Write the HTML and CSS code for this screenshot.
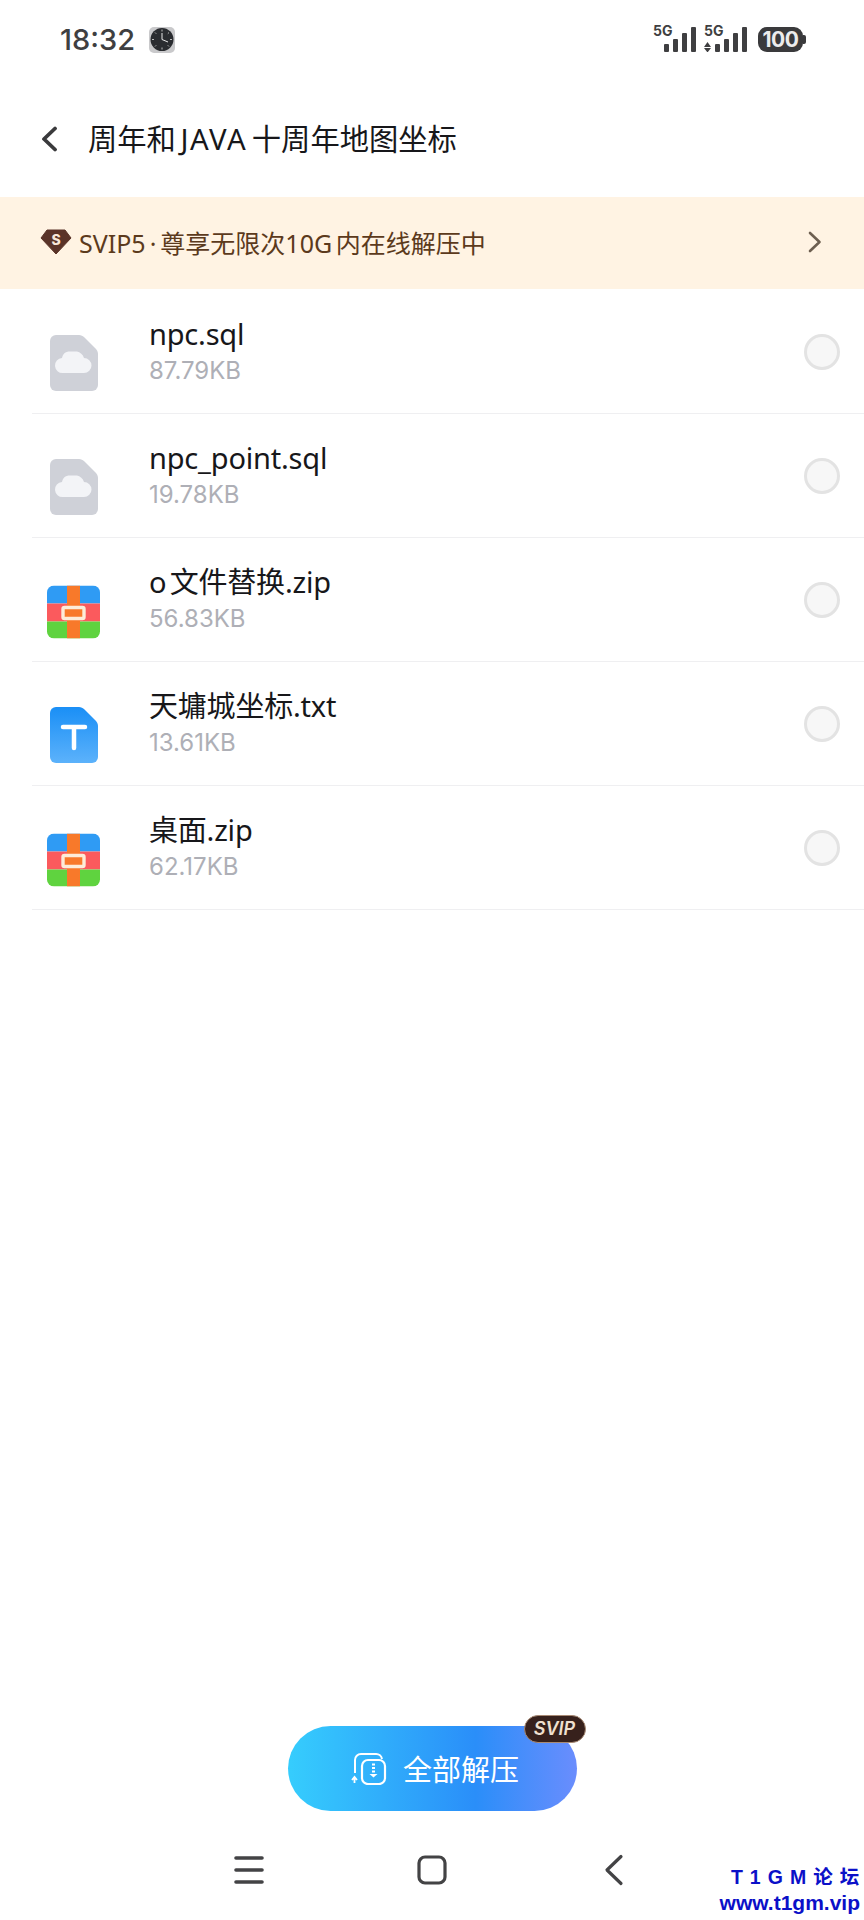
FILE: index.html
```html
<!DOCTYPE html>
<html lang="zh">
<head>
<meta charset="utf-8">
<title>周年和 JAVA 十周年地图坐标</title>
<link rel="stylesheet" href="styles.css">
</head>
<body>
<div class="page">
  <div class="status">
    <div class="status-left">
      <span class="time">18:32</span>
      <svg class="clock" viewBox="0 0 26 26"><rect width="26" height="26" rx="5" fill="#c9c9cb"/><circle cx="13" cy="12.500" r="11.500" fill="#2a2c30"/><path d="M13 12.500V6M13 12.500l6 2.500" stroke="#e8e8e8" stroke-width="1" fill="none"/><path d="M13 2.500v2M13 20.500v2M3 12.500h2M21 12.500h2M6 5.500l1.200 1.200M20 5.500l-1.200 1.200M6 19.500l1.200-1.200M20 19.500l-1.200-1.200" stroke="#bbb" stroke-width="1"/></svg>
    </div>
    <div class="status-right">
      <div class="signal">
        <span class="net">5G</span>
        <svg class="bars" viewBox="0 0 33 25"><rect x="0" y="17" width="5" height="8" rx="1"/><rect x="9" y="12" width="5" height="13" rx="1"/><rect x="18" y="6" width="5" height="19" rx="1"/><rect x="27" y="0" width="5" height="25" rx="1"/></svg>
      </div>
      <div class="signal">
        <span class="net">5G</span>
        <svg class="bars wide" viewBox="0 0 43 25"><path d="M0 20l3.500-5 3.500 5zM0 21h7l-3.500 4.500z"/><rect x="11" y="17" width="5" height="8" rx="1"/><rect x="20" y="12" width="5" height="13" rx="1"/><rect x="29" y="6" width="5" height="19" rx="1"/><rect x="38" y="0" width="5" height="25" rx="1"/></svg>
      </div>
      <div class="battery"><span class="battery-level">100</span><span class="battery-tip"></span></div>
    </div>
  </div>

  <header class="title-bar">
    <svg class="back" viewBox="0 0 18 26"><path d="M15 2.500L4 13l11 10.500" fill="none" stroke="#3a3a3c" stroke-width="3.800" stroke-linecap="round" stroke-linejoin="round"/></svg>
    <h1 class="title">周年和 <span class="latin">JAVA</span> 十周年地图坐标</h1>
  </header>

  <div class="banner">
    <svg class="gem" viewBox="0 0 32 26"><path d="M7 1h18l6 8-15 16L1 9z" fill="#5a3328" stroke="#5a3328" stroke-linejoin="round"/><text x="16" y="15.500" class="gem-s">S</text></svg>
    <span class="banner-text">SVIP5<span class="dot">·</span>尊享无限次10G 内在线解压中</span>
    <svg class="chev" viewBox="0 0 14 22"><path d="M2 2l9.500 9L2 20" fill="none" stroke="#6d5f50" stroke-width="2.600" stroke-linecap="round" stroke-linejoin="round"/></svg>
  </div>

  <main class="list">
    <div class="row">
      <div class="icon-cell"><svg class="ficon" viewBox="0 0 48 56"><path d="M6 0h23c2 0 4 1 5.500 2.500l11 11C47 15 48 17 48 19v31a6 6 0 0 1-6 6H6a6 6 0 0 1-6-6V6a6 6 0 0 1 6-6z" fill="#cfd1d8"/><path d="M13 38a7.500 7.500 0 0 1-1-15c1-6 6-6.500 7-6.500h8c3 .5 6 3 7 6.500a7.500 7.500 0 0 1 0 15z" fill="#f3f4f7"/></svg></div>
      <div class="meta"><div class="name">npc.sql</div><div class="size">87.79KB</div></div>
      <span class="radio"></span>
    </div>
    <div class="row">
      <div class="icon-cell"><svg class="ficon" viewBox="0 0 48 56"><path d="M6 0h23c2 0 4 1 5.500 2.500l11 11C47 15 48 17 48 19v31a6 6 0 0 1-6 6H6a6 6 0 0 1-6-6V6a6 6 0 0 1 6-6z" fill="#cfd1d8"/><path d="M13 38a7.500 7.500 0 0 1-1-15c1-6 6-6.500 7-6.500h8c3 .5 6 3 7 6.500a7.500 7.500 0 0 1 0 15z" fill="#f3f4f7"/></svg></div>
      <div class="meta"><div class="name">npc_point.sql</div><div class="size">19.78KB</div></div>
      <span class="radio"></span>
    </div>
    <div class="row">
      <div class="icon-cell"><svg class="zicon" viewBox="0 0 53 53"><defs><clipPath id="zc"><rect width="53" height="53" rx="7"/></clipPath></defs><g clip-path="url(#zc)"><rect width="53" height="18" fill="#2f9bf4"/><rect y="18" width="53" height="18" fill="#fb5a5d"/><rect y="36" width="53" height="17" fill="#5fd33f"/><rect x="20" width="13" height="53" fill="#f8792a"/></g><rect x="16" y="22" width="21" height="11" rx="1.500" fill="#f8792a" stroke="#fdecd8" stroke-width="3.400"/></svg></div>
      <div class="meta"><div class="name">o 文件替换.zip</div><div class="size">56.83KB</div></div>
      <span class="radio"></span>
    </div>
    <div class="row">
      <div class="icon-cell"><svg class="ficon" viewBox="0 0 48 56"><defs><linearGradient id="tg" x1="0" y1="0" x2="0" y2="1"><stop offset="0" stop-color="#1a8ff6"/><stop offset="1" stop-color="#5cb2fb"/></linearGradient></defs><path d="M6 0h23c2 0 4 1 5.500 2.500l11 11C47 15 48 17 48 19v31a6 6 0 0 1-6 6H6a6 6 0 0 1-6-6V6a6 6 0 0 1 6-6z" fill="url(#tg)"/><path d="M13 20h22M24 20v21" fill="none" stroke="#fff" stroke-width="4.500" stroke-linecap="round"/></svg></div>
      <div class="meta"><div class="name">天墉城坐标.txt</div><div class="size">13.61KB</div></div>
      <span class="radio"></span>
    </div>
    <div class="row">
      <div class="icon-cell"><svg class="zicon" viewBox="0 0 53 53"><g clip-path="url(#zc)"><rect width="53" height="18" fill="#2f9bf4"/><rect y="18" width="53" height="18" fill="#fb5a5d"/><rect y="36" width="53" height="17" fill="#5fd33f"/><rect x="20" width="13" height="53" fill="#f8792a"/></g><rect x="16" y="22" width="21" height="11" rx="1.500" fill="#f8792a" stroke="#fdecd8" stroke-width="3.400"/></svg></div>
      <div class="meta"><div class="name">桌面.zip</div><div class="size">62.17KB</div></div>
      <span class="radio"></span>
    </div>
  </main>

  <div class="action">
    <button class="extract">
      <svg class="extract-icon" viewBox="0 0 36 32"><path d="M4 20V7a6 6 0 0 1 6-6h15a6 6 0 0 1 6 5" fill="none" stroke="#fff" stroke-width="2"/><rect x="11" y="7" width="23" height="24" rx="6" fill="none" stroke="#fff" stroke-width="2.200"/><path d="M22.500 10.500v2M22.500 14v2M22.500 17.500v2" stroke="#fff" stroke-width="3"/><path d="M18.500 21h8l-4 3.500z" fill="#fff"/><path d="M3.500 24v6M1 27l2.500-3 2.500 3" fill="none" stroke="#fff" stroke-width="1.800"/></svg>
      <span class="extract-label">全部解压</span>
      <span class="svip">SVIP</span>
    </button>
  </div>

  <nav class="navbar">
    <svg class="nav-menu" viewBox="0 0 30 30"><path d="M2 3h26M2 15h26M2 27h26" stroke="#434345" stroke-width="3.600" stroke-linecap="round"/></svg>
    <svg class="nav-home" viewBox="0 0 30 30"><rect x="2" y="2" width="26" height="26" rx="6" fill="none" stroke="#434345" stroke-width="3.200"/></svg>
    <svg class="nav-back" viewBox="0 0 20 32"><path d="M17 2.500L3 16l14 13.500" fill="none" stroke="#434345" stroke-width="3.200" stroke-linecap="round" stroke-linejoin="round"/></svg>
  </nav>

  <div class="watermark"><div class="wm-top">T 1 G M 论 坛</div><div class="wm-url">www.t1gm.vip</div></div>
</div>
</body>
</html>
```
FILE: styles.css
```css
* { box-sizing: border-box; }
html, body { margin: 0; padding: 0; background: #fff; }
body { font-family: "Noto Sans", "Noto Sans CJK SC", sans-serif; }
.page { position: relative; width: 864px; height: 1920px; display: flex; flex-direction: column; overflow: hidden; background: #fff; }

.status { height: 80px; flex: none; display: flex; justify-content: space-between; align-items: flex-start; padding: 20px 58px 0 60px; color: #3f3f41; }
.status-left { display: flex; align-items: center; gap: 14px; }
.time { font-family: Inter, sans-serif; font-size: 29px; font-weight: 500; line-height: 40px; }
.clock { width: 26px; height: 26px; }
.status-right { display: flex; align-items: flex-start; gap: 7px; }
.signal { position: relative; display: flex; justify-content: flex-end; width: 44px; height: 32px; }
.signal + .signal { width: 43px; }
.net { position: absolute; left: 0; top: 3px; font-family: Inter, sans-serif; font-size: 14px; font-weight: 700; line-height: 16px; }
.bars { width: 33px; height: 25px; margin-top: 7px; fill: #3f3f41; }
.bars.wide { width: 43px; }
.battery { display: flex; align-items: center; margin-left: 4px; margin-top: 7px; }
.battery-level { width: 45px; height: 25px; border-radius: 9px; background: #3a3a3c; color: #ececec; font-family: Inter, sans-serif; font-size: 21px; font-weight: 700; line-height: 25px; text-align: center; letter-spacing: -0.5px; }
.battery-tip { width: 3px; height: 9px; background: #3a3a3c; border-radius: 0 2px 2px 0; }

.title-bar { height: 117px; flex: none; display: flex; align-items: center; padding: 0 0 0 40px; gap: 30px; }
.back { width: 18px; height: 26px; }
.title { margin: 0; font-size: 29.3px; font-weight: 400; color: #17171a; line-height: 40px; word-spacing: -3px; }
.latin { letter-spacing: 1.5px; }

.banner { height: 92px; flex: none; display: flex; align-items: center; padding: 0 42px 0 40px; background: #fff3e3; }
.gem { width: 32px; height: 26px; flex: none; margin-bottom: 3px; }
.gem-s { font-family: Inter, sans-serif; font-size: 14px; font-weight: 800; fill: #f7e6d8; text-anchor: middle; }
.banner-text { flex: 1; margin-left: 7px; padding-bottom: 3px; font-size: 25px; color: #5c3a1c; white-space: nowrap; word-spacing: -3px; }
.dot { margin: 0 4px; }
.chev { width: 14px; height: 22px; margin-bottom: 2px; }

.list { padding: 1px 0 0 32px; }
.row { height: 124px; display: flex; align-items: center; border-bottom: 1px solid #efeff1; padding-right: 24px; }
.icon-cell { width: 117px; flex: none; display: flex; align-items: center; padding-left: 18px; }
.ficon { width: 48px; height: 56px; margin-top: 22px; }
.zicon { width: 53px; height: 54px; margin-left: -3px; margin-top: 25px; }
.meta { flex: 1; min-width: 0; }
.name { font-size: 29px; line-height: 36px; margin-bottom: 2px; color: #17171a; letter-spacing: -0.2px; word-spacing: -4px; }
.size { font-family: Inter, "Noto Sans", sans-serif; font-size: 24px; line-height: 34px; color: #aeafb6; }
.radio { width: 36px; height: 36px; border-radius: 50%; background: #f7f7f7; border: 3px solid #e3e3e3; flex: none; }

.action { flex: 1; display: flex; justify-content: center; align-items: flex-end; padding-bottom: 109px; }
.extract { position: relative; width: 289px; height: 85px; border: 0; border-radius: 43px; background: linear-gradient(90deg, #36cdfd 0%, #2a8ef9 65%, #6a8dfd 100%); color: #fff; display: flex; align-items: center; justify-content: center; gap: 16px; font-family: "Noto Sans CJK SC", sans-serif; font-size: 29px; padding: 0 0 0 6px; }
.extract-icon { width: 36px; height: 32px; }
.extract-label { padding-bottom: 2px; }
.svip { position: absolute; right: -9px; top: -11px; width: 62px; height: 28px; border-radius: 14px; background: #37211c; border: 1px solid #a88a74; color: #efe0cf; font-family: Inter, sans-serif; font-size: 18px; font-style: italic; font-weight: 600; line-height: 26px; text-align: center; }

.navbar { position: absolute; left: 0; right: 0; bottom: 34px; height: 32px; display: flex; align-items: center; }
.nav-menu { width: 30px; height: 30px; margin-left: 234px; }
.nav-home { width: 30px; height: 30px; margin-left: 153px; }
.nav-back { width: 20px; height: 32px; margin-left: 157px; }

.watermark { position: absolute; right: 4px; bottom: 4px; text-align: right; color: #0b10c8; font-weight: 700; font-family: "Liberation Sans", "Noto Sans CJK SC", sans-serif; }
.wm-top { font-size: 19.5px; line-height: 26px; letter-spacing: 0.8px; }
.wm-url { font-size: 21px; line-height: 26px; }
```
